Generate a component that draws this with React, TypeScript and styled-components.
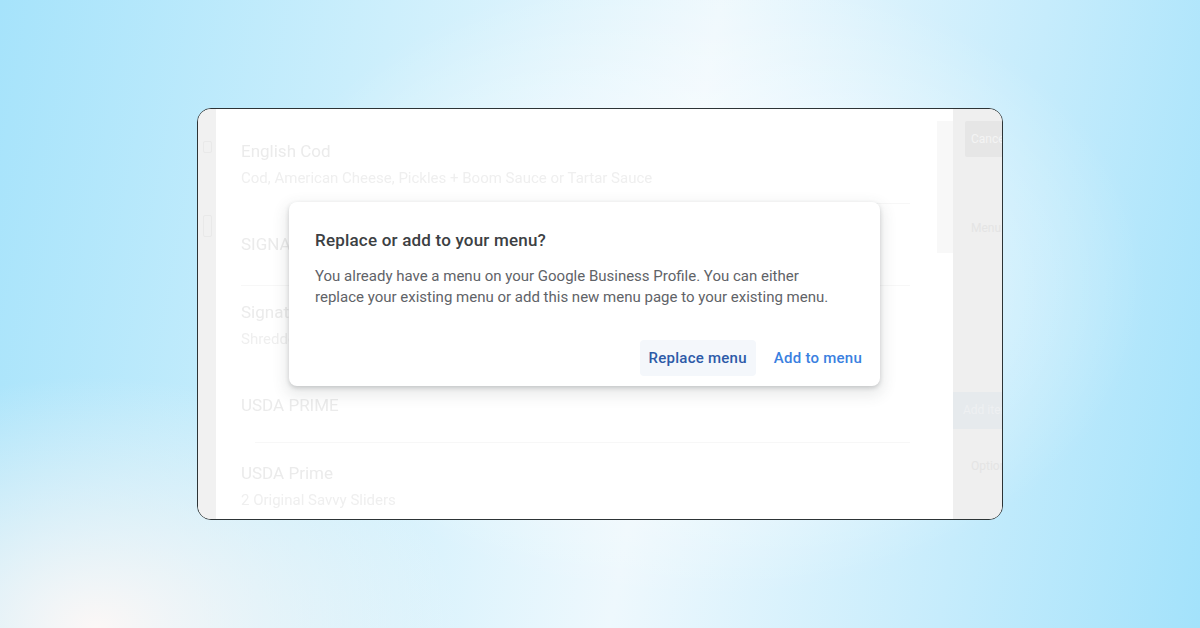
import React from 'react';
import styled, { createGlobalStyle } from 'styled-components';

const GlobalStyle = createGlobalStyle`
  html, body {
    margin: 0;
    padding: 0;
  }
  body {
    font-family: Roboto, "Liberation Sans", Arial, sans-serif;
  }
`;

const Page = styled.div`
  width: 1200px;
  height: 628px;
  display: flex;
  align-items: center;
  justify-content: center;
  overflow: hidden;
  background:
    radial-gradient(ellipse 520px 360px at 8% 100%, rgba(255, 248, 246, 0.95), rgba(255, 255, 255, 0) 70%),
    radial-gradient(ellipse 600px 420px at 58% 45%, rgba(255, 255, 255, 0.9), rgba(255, 255, 255, 0) 75%),
    linear-gradient(100deg, #a6e3fb 0%, #cdeffc 30%, #eef8fd 55%, #c6ecfc 80%, #a3e2fb 100%);
`;

const Frame = styled.div`
  width: 806px;
  height: 412px;
  box-sizing: border-box;
  border: 1px solid #2d3436;
  border-radius: 14px;
  overflow: hidden;
  background: #fff;
  display: grid;
  grid-template-columns: 18px 1fr 49px;
`;

const LeftRail = styled.div`
  background: #f1f1f1;
  display: flex;
  flex-direction: column;
  align-items: center;
  padding-top: 32px;
  gap: 62px;
`;

const RailMark = styled.div<{ $h: number }>`
  width: 7px;
  height: ${(p) => p.$h}px;
  border-radius: 2px;
  border: 1px solid #e9e9e9;
`;

const Main = styled.div`
  position: relative;
  display: grid;
  grid-template-columns: 1fr 16px;
`;

const List = styled.div`
  padding: 31px 0 0 25px;
  display: flex;
  flex-direction: column;
  filter: blur(0.4px);
`;

const Item = styled.div<{ $top: number }>`
  margin-top: ${(p) => p.$top}px;
`;

const ItemName = styled.div`
  font-size: 17px;
  line-height: 22px;
  color: #ebebeb;
`;

const ItemDesc = styled.div`
  font-size: 15px;
  line-height: 20px;
  margin-top: 6px;
  color: #efefef;
`;

const Divider = styled.div<{ $top: number; $inset: number }>`
  height: 1px;
  margin: ${(p) => p.$top}px 27px 0 ${(p) => p.$inset}px;
  background: #f7f7f7;
`;

const Scroll = styled.div`
  padding-top: 12px;
`;

const ScrollThumb = styled.div`
  height: 132px;
  background: #f8f8f8;
`;

const RightPanel = styled.div`
  background: #efefef;
  display: flex;
  flex-direction: column;
  padding-top: 12px;
`;

const PanelButton = styled.div`
  height: 36px;
  margin-left: 12px;
  background: #e6e6e6;
  border-radius: 2px 0 0 2px;
  font-size: 12px;
  line-height: 36px;
  padding-left: 6px;
  color: #f4f4f4;
  overflow: hidden;
  white-space: nowrap;
`;

const PanelText = styled.div<{ $top: number }>`
  margin-top: ${(p) => p.$top}px;
  padding-left: 18px;
  font-size: 12px;
  color: #e4e4e4;
  white-space: nowrap;
  overflow: hidden;
`;

const PanelBand = styled.div`
  margin-top: 157px;
  height: 37px;
  background: #e6eaed;
  font-size: 12px;
  line-height: 37px;
  padding-left: 10px;
  color: #eef0f2;
  white-space: nowrap;
  overflow: hidden;
`;

const Dialog = styled.div`
  position: absolute;
  left: 73px;
  top: 93px;
  width: 591px;
  height: 184px;
  box-sizing: border-box;
  background: #fff;
  border-radius: 8px;
  box-shadow: 0 2px 4px rgba(60, 64, 67, 0.22), 0 6px 14px 4px rgba(60, 64, 67, 0.1);
  padding: 26px 9px 10px 26px;
  display: flex;
  flex-direction: column;
`;

const Title = styled.div`
  font-size: 17px;
  line-height: 24px;
  font-weight: 500;
  color: #3c4043;
  letter-spacing: 0.2px;
`;

const Body = styled.div`
  margin-top: 14px;
  padding-right: 24px;
  font-size: 15px;
  line-height: 21px;
  color: #5f6368;
`;

const Actions = styled.div`
  margin-top: auto;
  display: flex;
  justify-content: flex-end;
  gap: 9px;
`;

const ActionButton = styled.button<{ $focused?: boolean }>`
  height: 36px;
  padding: 0 9px;
  border: none;
  border-radius: 4px;
  font-family: Roboto, "Liberation Sans", Arial, sans-serif;
  font-size: 15px;
  font-weight: 500;
  letter-spacing: 0.25px;
  cursor: pointer;
  background: ${(p) => (p.$focused ? '#f4f7fb' : 'transparent')};
  color: ${(p) => (p.$focused ? '#2d5aa8' : '#3a80e0')};
`;

const items = [
  { name: 'English Cod', desc: 'Cod, American Cheese, Pickles + Boom Sauce or Tartar Sauce', top: 0, divider: { top: 15, inset: 54 } },
  { name: 'SIGNATURE', desc: '', top: 29, divider: { top: 30, inset: 0 } },
  { name: 'Signature Chicken', desc: 'Shredded Lettuce, Pickles + Boom Sauce', top: 15, divider: null },
  { name: 'USDA PRIME', desc: '', top: 45, divider: { top: 26, inset: 14 } },
  { name: 'USDA Prime', desc: '2 Original Savvy Sliders', top: 19, divider: null },
];

export default function App() {
  return (
    <>
      <GlobalStyle />
      <Page>
        <Frame>
          <LeftRail>
            <RailMark $h={10} />
            <RailMark $h={20} />
          </LeftRail>
          <Main>
            <List>
              {items.map((it) => (
                <React.Fragment key={it.name}>
                  <Item $top={it.top}>
                    <ItemName>{it.name}</ItemName>
                    {it.desc && <ItemDesc>{it.desc}</ItemDesc>}
                  </Item>
                  {it.divider && <Divider $top={it.divider.top} $inset={it.divider.inset} />}
                </React.Fragment>
              ))}
            </List>
            <Scroll>
              <ScrollThumb />
            </Scroll>
            <Dialog role="dialog">
              <Title>Replace or add to your menu?</Title>
              <Body>
                You already have a menu on your Google Business Profile. You can either
                replace your existing menu or add this new menu page to your existing menu.
              </Body>
              <Actions>
                <ActionButton $focused>Replace menu</ActionButton>
                <ActionButton>Add to menu</ActionButton>
              </Actions>
            </Dialog>
          </Main>
          <RightPanel>
            <PanelButton>Cancel</PanelButton>
            <PanelText $top={64}>Menu</PanelText>
            <PanelBand>Add item</PanelBand>
            <PanelText $top={30}>Options</PanelText>
          </RightPanel>
        </Frame>
      </Page>
    </>
  );
}
